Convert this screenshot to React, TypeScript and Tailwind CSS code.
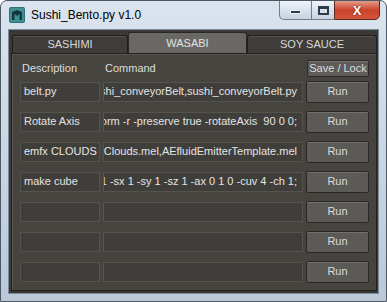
import React from 'react';

const rows = [
  { desc: 'belt.py', cmd: 'import sushi_conveyorBelt,sushi_conveyorBelt.py' },
  { desc: 'Rotate Axis', cmd: 'xform -r -preserve true -rotateAxis  90 0 0;' },
  { desc: 'emfx CLOUDS', cmd: 'source emfxClouds.mel,AEfluidEmitterTemplate.mel' },
  { desc: 'make cube', cmd: 'polyCube -w 1 -h 1 -d 1 -sx 1 -sy 1 -sz 1 -ax 0 1 0 -cuv 4 -ch 1;' },
  { desc: '', cmd: '' },
  { desc: '', cmd: '' },
  { desc: '', cmd: '' },
];

const tabs = ['SASHIMI', 'WASABI', 'SOY SAUCE'];

const AppIcon = () => (
  <svg width="16" height="16" viewBox="0 0 16 16" className="shrink-0">
    <rect x="0" y="0" width="16" height="16" rx="2" fill="#2d6f74" />
    <rect x="1" y="1" width="14" height="14" rx="1" fill="#3f8f93" />
    <path d="M3 13 L3 5 L8 3 L13 5 L13 13 L10.5 13 L10.5 7 L8 9 L5.5 7 L5.5 13 Z" fill="#12383c" />
  </svg>
);

export default function App() {
  return (
    <div
      className="w-[387px] h-[302px] flex flex-col rounded-t-[7px] border border-[#4d5866] bg-gradient-to-b from-[#dbe4ee] via-[#c9d6e3] to-[#b9c9d9] px-[7px] pb-[7px] overflow-hidden"
      style={{ fontFamily: '"Liberation Sans", Arial, sans-serif' }}
    >
      {/* title bar */}
      <div className="h-[28px] flex items-start shrink-0">
        <div className="flex items-center gap-[6px] pt-[6px] pl-px">
          <AppIcon />
          <span className="text-[12px] text-black leading-none">Sushi_Bento.py v1.0</span>
        </div>
        <div className="ml-auto flex h-[20px] -mt-px -mr-[1px]">
          <div className="w-[32px] rounded-bl-[5px] border border-[#6f7d8c] border-r-0 bg-gradient-to-b from-[#eef3f8] to-[#c6d3e0] flex items-center justify-center">
            <div className="w-[11px] h-[4px] bg-[#2d3a48] border border-[#e9eef3] mt-[4px]" />
          </div>
          <div className="w-[23px] border border-[#6f7d8c] border-r-0 bg-gradient-to-b from-[#eef3f8] to-[#c6d3e0] flex items-center justify-center">
            <div className="w-[11px] h-[9px] border-2 border-[#2d3a48] border-t-[3px]" />
          </div>
          <div className="w-[46px] rounded-br-[5px] border border-[#5b2b22] bg-gradient-to-b from-[#e39a88] via-[#c9442e] to-[#d4553a] flex items-center justify-center">
            <span className="text-white font-bold text-[13px] leading-none" style={{ textShadow: '0 0 2px #5b1a10' }}>X</span>
          </div>
        </div>
      </div>

      {/* client area */}
      <div className="flex-1 flex flex-col bg-[#3a3835] border border-[#7c8a99] pl-[2px] pr-px pb-[2px]">
        {/* tabs */}
        <div className="h-[23px] flex items-end pl-px shrink-0">
          {tabs.map((t, i) =>
            i === 1 ? (
              <div
                key={t}
                className="w-[119px] h-[21px] bg-[#6a6865] border border-[#2a2826] border-b-0 rounded-t-[3px] flex items-center justify-center text-[11px] text-[#e2e2e2]"
              >
                {t}
              </div>
            ) : (
              <div
                key={t}
                className={`${i === 0 ? 'w-[116px]' : 'w-[130px]'} h-[18px] bg-[#3f3d3a] border border-[#1f1e1c] border-b-0 rounded-t-[3px] flex items-center justify-center text-[11px] text-[#d6d6d6] shadow-[inset_0_1px_0_#55534f]`}
              >
                {t}
              </div>
            )
          )}
        </div>

        {/* pane */}
        <div className="flex-1 bg-[#46443f] border border-[#24221f] shadow-[inset_1px_1px_0_#57554f] pl-[8px] pt-[6px]">
          <div className="grid grid-cols-[80px_200px_63px] gap-x-[3px] items-center">
            <span className="text-[11px] text-[#dedede] pl-[2px] self-end pb-[1px]">Description</span>
            <span className="text-[11px] text-[#dedede] pl-[2px] self-end pb-[1px]">Command</span>
            <button className="ml-px h-[17px] rounded-[2px] bg-[#5e5c59] border border-[#2b2927] shadow-[inset_0_1px_0_#77756f] text-[11px] text-[#dcdcdc] leading-none">
              Save / Lock
            </button>
          </div>

          <div className="grid grid-cols-[80px_200px_63px] gap-x-[3px] gap-y-[10px] mt-[4px]">
            {rows.map((r, i) => (
              <React.Fragment key={i}>
                <div className="h-[20px] bg-[#403e3a] border border-[#55534e] flex items-center px-[3px] overflow-hidden text-[11px] text-[#e4e4e4] whitespace-nowrap">
                  {r.desc}
                </div>
                <div className="h-[20px] bg-[#403e3a] border border-[#55534e] flex items-center justify-end pr-[5px] overflow-hidden text-[11px] text-[#e4e4e4] whitespace-pre">
                  {r.cmd}
                </div>
                <button className="h-[22px] -my-px rounded-[2px] bg-[#5c5a57] border border-[#2a2826] shadow-[inset_0_1px_0_#73716c] text-[11px] text-[#dcdcdc] leading-none">
                  Run
                </button>
              </React.Fragment>
            ))}
          </div>
        </div>
      </div>
    </div>
  );
}
